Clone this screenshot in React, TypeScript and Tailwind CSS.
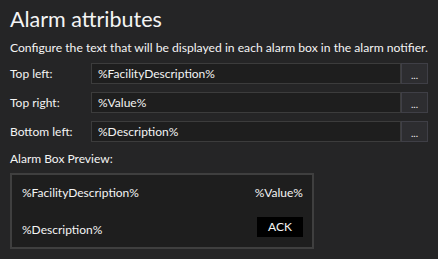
import React from "react";

const rows = [
  { label: "Top left:", value: "%FacilityDescription%" },
  { label: "Top right:", value: "%Value%" },
  { label: "Bottom left:", value: "%Description%" },
];

function FieldRow({ label, value }: { label: string; value: string }) {
  return (
    <div className="flex items-center h-[21px]">
      <div className="w-[81px] shrink-0">{label}</div>
      <div className="flex-1 h-full bg-[#1e1e1e] border border-[#3c3c3c] flex items-center px-[6px]">
        {value}
      </div>
      <button className="w-[27px] h-full bg-[#2d2d30] border border-[#3f3f46] text-[10px] leading-none pb-[3px] flex items-end justify-center">
        ...
      </button>
    </div>
  );
}

export default function App() {
  return (
    <div
      className="w-[438px] h-[259px] bg-[#252526] text-[#f4f4f4] px-[10px] pt-[5px] text-[12px]"
      style={{ fontFamily: 'Lato, "Noto Sans", sans-serif' }}
    >
      <h1 className="text-[21.5px] leading-[28px] font-normal">Alarm attributes</h1>
      <p className="mt-[6px] leading-[18px] whitespace-nowrap text-[12.15px]">
        Configure the text that will be displayed in each alarm box in the alarm notifier.
      </p>
      <div className="mt-[6px] flex flex-col gap-[8px]">
        {rows.map((r) => (
          <FieldRow key={r.label} label={r.label} value={r.value} />
        ))}
      </div>
      <div className="mt-[8px] leading-[18px]">Alarm Box Preview:</div>
      <div className="mt-[5px] w-[304px] h-[76px] border-2 border-[#3f3f3f] bg-[#1e1e1e] pl-[10px] pr-[9px] pt-[9px] pb-[8px] flex flex-col justify-between">
        <div className="flex justify-between">
          <span>%FacilityDescription%</span>
          <span>%Value%</span>
        </div>
        <div className="flex justify-between items-center">
          <span className="mt-[6px]">%Description%</span>
          <span className="bg-black w-[46px] h-[20px] flex items-center justify-center">ACK</span>
        </div>
      </div>
    </div>
  );
}
